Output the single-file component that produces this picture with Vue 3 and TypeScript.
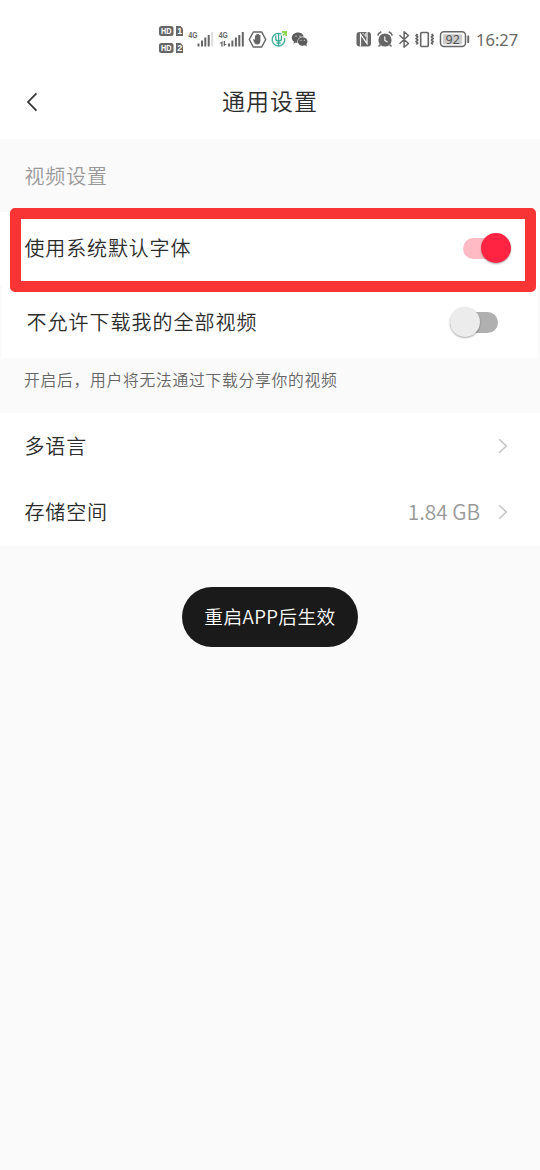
<script setup lang="ts">
import { ref } from 'vue'

const systemFont = ref<boolean>(true)
const blockDownload = ref<boolean>(false)

interface LinkRow {
  label: string
  value?: string
}

const links: LinkRow[] = [
  { label: '多语言' },
  { label: '存储空间', value: '1.84 GB' },
]
</script>

<template>
  <div class="screen">
    <header class="status">
      <svg class="network" width="150" height="36" viewBox="158 22 150 36">
        <g fill="#666">
          <rect x="159" y="26" width="14.500" height="10" rx="2.500" />
          <path d="M176 26h4.500l2.500 2.500v7.500H176z" />
          <rect x="159" y="43" width="14.500" height="10" rx="2.500" />
          <path d="M176 43h4.500l2.500 2.500V53H176z" />
        </g>
        <g class="hd" fill="#fff">
          <text x="161" y="34.200" textLength="10.500" lengthAdjust="spacingAndGlyphs">HD</text>
          <text x="177.200" y="34.200">1</text>
          <text x="161" y="51.200" textLength="10.500" lengthAdjust="spacingAndGlyphs">HD</text>
          <text x="177.200" y="51.200">2</text>
        </g>
        <g class="g4" fill="#666">
          <text x="188.600" y="38" textLength="9" lengthAdjust="spacingAndGlyphs">4G</text>
          <text x="218.800" y="38" textLength="9" lengthAdjust="spacingAndGlyphs">4G</text>
        </g>
        <g fill="#666">
          <rect x="197.500" y="43.500" width="2" height="3" />
          <rect x="201" y="40.500" width="2" height="6" />
          <rect x="204.300" y="37.500" width="2" height="9" />
          <rect x="207.700" y="35" width="2" height="11.500" />
          <rect x="211.200" y="32" width="2" height="14.500" fill="#ddd" />
          <rect x="228" y="43.500" width="2" height="3" />
          <rect x="231.400" y="40.500" width="2" height="6" />
          <rect x="234.900" y="37.500" width="2" height="9" />
          <rect x="238.300" y="35" width="2" height="11.500" />
          <rect x="241.800" y="32" width="2" height="14.500" />
          <path d="M222.600 41v5.500h-1.300v-3h-2zM223.700 46.500V41h1.300v3h2z" />
        </g>
        <path d="M253.300 32h8.400l4 7.500-4 7.500h-8.400l-4-7.500z" fill="none" stroke="#666" stroke-width="1.500" stroke-linejoin="round" />
        <path d="M253 39.500l1-.5 1 1v-4.600h1.200v-1.200h1.400V34h1.400v1h1.400v5.500c0 2.600-1 4-3.200 4-2.600 0-3-2-4.200-5z" fill="#666" />
        <path d="M281.500 34.200A6.300 6.300 0 1 0 284.500 38" fill="none" stroke="#43ae9e" stroke-width="1.400" />
        <path d="M275.800 35.500v3.500q0 2 2.800 2t2.800-2v-3.500M278.600 33v13M276.500 43h4.200" fill="none" stroke="#3aa99a" stroke-width="1.300" />
        <path d="M282 31h5v5h-1.700v-2l-2 2-1-1 2-2H282z" fill="#8bd750" />
        <path d="M298 32.500c-3.500 0-6.200 2.300-6.200 5.200 0 1.600.8 3 2.200 4l-.6 2 2.300-1.100 1.700.3c-.5-4 2.400-6.500 6.400-6.300-.6-2.500-2.900-4.100-5.800-4.100z" fill="#5c5c5c" />
        <ellipse cx="302.600" cy="41.500" rx="4.800" ry="4.200" fill="#5c5c5c" />
        <path d="M304 44.500l2.800 2-.4-3z" fill="#5c5c5c" />
        <g fill="#ddd">
          <circle cx="296" cy="36.200" r=".7" /><circle cx="300" cy="36.200" r=".7" />
          <circle cx="301" cy="40.300" r=".6" /><circle cx="304.300" cy="40.300" r=".6" />
        </g>
      </svg>
      <svg class="device" width="116" height="36" viewBox="355 22 116 36">
        <rect x="356.500" y="32" width="14.500" height="14.500" rx="3" fill="#666" />
        <path d="M360.500 46.500V34.200l6.500 9.300V32" fill="none" stroke="#fff" stroke-width="1.200" />
        <path d="M362.200 33.300h1.200l2.200 3.200V33" fill="none" stroke="#fff" stroke-width=".7" />
        <circle cx="385" cy="40" r="6.600" fill="#666" />
        <path d="M377.700 35.500q.8-2.700 3.600-3.700M388.700 31.800q2.800 1 3.600 3.700M380.500 44.500l-2 2M389.500 44.500l2 2" fill="none" stroke="#666" stroke-width="1.600" />
        <path d="M384.800 36.500v4l2.800 1.600" fill="none" stroke="#fff" stroke-width="1.100" />
        <path d="M399.500 35.300l9 8.200-4.400 3.700V31.800l4.400 3.700-9 8.200" fill="none" stroke="#666" stroke-width="1.500" stroke-linejoin="round" />
        <rect x="420.700" y="32.500" width="7.600" height="14" rx="1" fill="none" stroke="#666" stroke-width="1.600" />
        <path d="M417.500 34l-1.200 1.500 1.200 1.500-1.200 1.500 1.200 1.500-1.200 1.500 1.200 1.500-1.200 1.500M431.700 34l1.200 1.500-1.200 1.500 1.200 1.500-1.200 1.500 1.200 1.500-1.200 1.500 1.200 1.500" fill="none" stroke="#666" stroke-width="2" />
        <rect x="440.500" y="31.800" width="25" height="14.800" rx="3.500" fill="#fff" stroke="#666" stroke-width="1.500" />
        <rect x="443" y="34.200" width="19" height="10" rx="1" fill="#ccc" />
        <rect x="467.300" y="35.500" width="1.900" height="7.500" rx=".6" fill="#666" />
        <text class="battery" x="452.700" y="43.800" text-anchor="middle">92</text>
      </svg>
      <span class="clock">16:27</span>
    </header>

    <nav class="bar">
      <svg class="back" width="14" height="22" viewBox="0 0 14 22">
        <path d="M12.300 1.700L3.300 11l9 9.300" fill="none" stroke="#333" stroke-width="1.900" />
      </svg>
      <h1>通用设置</h1>
    </nav>

    <h2 class="section">视频设置</h2>

    <div class="row highlighted">
      <span>使用系统默认字体</span>
      <button class="switch" :class="{ on: systemFont }" @click="systemFont = !systemFont"><i></i></button>
      <div class="frame"></div>
    </div>
    <div class="row download">
      <span>不允许下载我的全部视频</span>
      <button class="switch" :class="{ on: blockDownload }" @click="blockDownload = !blockDownload"><i></i></button>
    </div>
    <p class="note">开启后，用户将无法通过下载分享你的视频</p>

    <div class="links">
      <div v-for="link in links" :key="link.label" class="link">
        <span>{{ link.label }}</span>
        <em v-if="link.value">{{ link.value }}</em>
        <svg width="10" height="16" viewBox="0 0 10 16">
          <path d="M1.200 1.200L8.200 8l-7 6.800" fill="none" stroke="#c4c4c4" stroke-width="1.600" />
        </svg>
      </div>
    </div>

    <div class="toast">重启APP后生效</div>
  </div>
</template>

<style>
body {
  background: #fafafa;
}
</style>

<style scoped>
.screen {
  box-sizing: border-box;
  width: 540px;
  height: 1170px;
  overflow: hidden;
  background: #fafafa;
  color: #2c2c2c;
  font-family: 'Noto Sans CJK SC', sans-serif;
  font-size: 20px;
  font-weight: 350;
  letter-spacing: 0.85px;
}
.status {
  display: flex;
  align-items: center;
  height: 80px;
  padding-left: 158px;
  background: #fff;
  letter-spacing: 0;
}
.device {
  margin-left: 47px;
}
.hd {
  font: bold 9px 'Liberation Sans', sans-serif;
}
.g4 {
  font: bold 9.5px 'Liberation Sans', sans-serif;
}
.battery {
  font: 12.5px 'Noto Sans', sans-serif;
  fill: #555;
}
.clock {
  margin-left: 5px;
  padding-bottom: 2px;
  font: 16.5px 'Noto Sans', sans-serif;
  color: #6a6a6a;
}
.bar {
  display: flex;
  align-items: center;
  height: 59px;
  box-sizing: border-box;
  padding: 0 222px 15px 25px;
  background: #fff;
}
h1 {
  flex: 1;
  margin: -4px 0 0 184px;
  font-size: 23px;
  font-weight: 350;
  letter-spacing: 1px;
  line-height: 32px;
  white-space: nowrap;
}
.section {
  margin: 0;
  padding-left: 24.5px;
  height: 73px;
  font-size: 20px;
  font-weight: 350;
  line-height: 73px;
  color: #999;
}
.row {
  position: relative;
  display: flex;
  align-items: center;
  justify-content: space-between;
  box-sizing: border-box;
  height: 73px;
  padding: 0 29px 1px 24.5px;
  background: #fff;
}
.row > span {
  line-height: 30px;
}
.highlighted > span {
  padding-bottom: 1px;
}
.download {
  margin: 0 2px;
  padding: 1px 40px 0 24.5px;
  letter-spacing: 1px;
}
.frame {
  position: absolute;
  z-index: 1;
  inset: -4px 4px -7px 10px;
  box-sizing: border-box;
  border: 11px solid #f83434;
  border-radius: 5px;
  pointer-events: none;
}
.switch {
  display: flex;
  align-items: center;
  width: 48px;
  height: 21px;
  padding: 0;
  border: 0;
  border-radius: 11px;
  background: #b0b0b0;
}
.switch i {
  flex: none;
  width: 30px;
  height: 30px;
  border-radius: 50%;
  background: #ececec;
  box-shadow: 0 1px 2px rgba(0, 0, 0, 0.35);
}
.switch.on {
  justify-content: flex-end;
  background: #ffbac4;
}
.switch.on i {
  background: #ff2442;
}
.note {
  margin: 0;
  height: 55px;
  padding-left: 24px;
  font-size: 15.8px;
  letter-spacing: 0.7px;
  line-height: 43px;
  color: #666;
}
.links {
  height: 133px;
  background: #fff;
}
.link {
  display: flex;
  align-items: center;
  height: 66px;
  padding: 0 32px 0 24.5px;
}
.link span {
  flex: 1;
  padding-bottom: 2px;
}
.link em {
  margin-right: 18px;
  padding-bottom: 2px;
  font-size: 20.8px;
  letter-spacing: 0;
  font-style: normal;
  color: #999;
}
.toast {
  width: 176px;
  height: 60px;
  margin: 41px auto 0;
  border-radius: 30px;
  background: #1a1a1a;
  color: #fff;
  font-size: 18.7px;
  letter-spacing: 0.4px;
  line-height: 58px;
  text-align: center;
}
</style>
